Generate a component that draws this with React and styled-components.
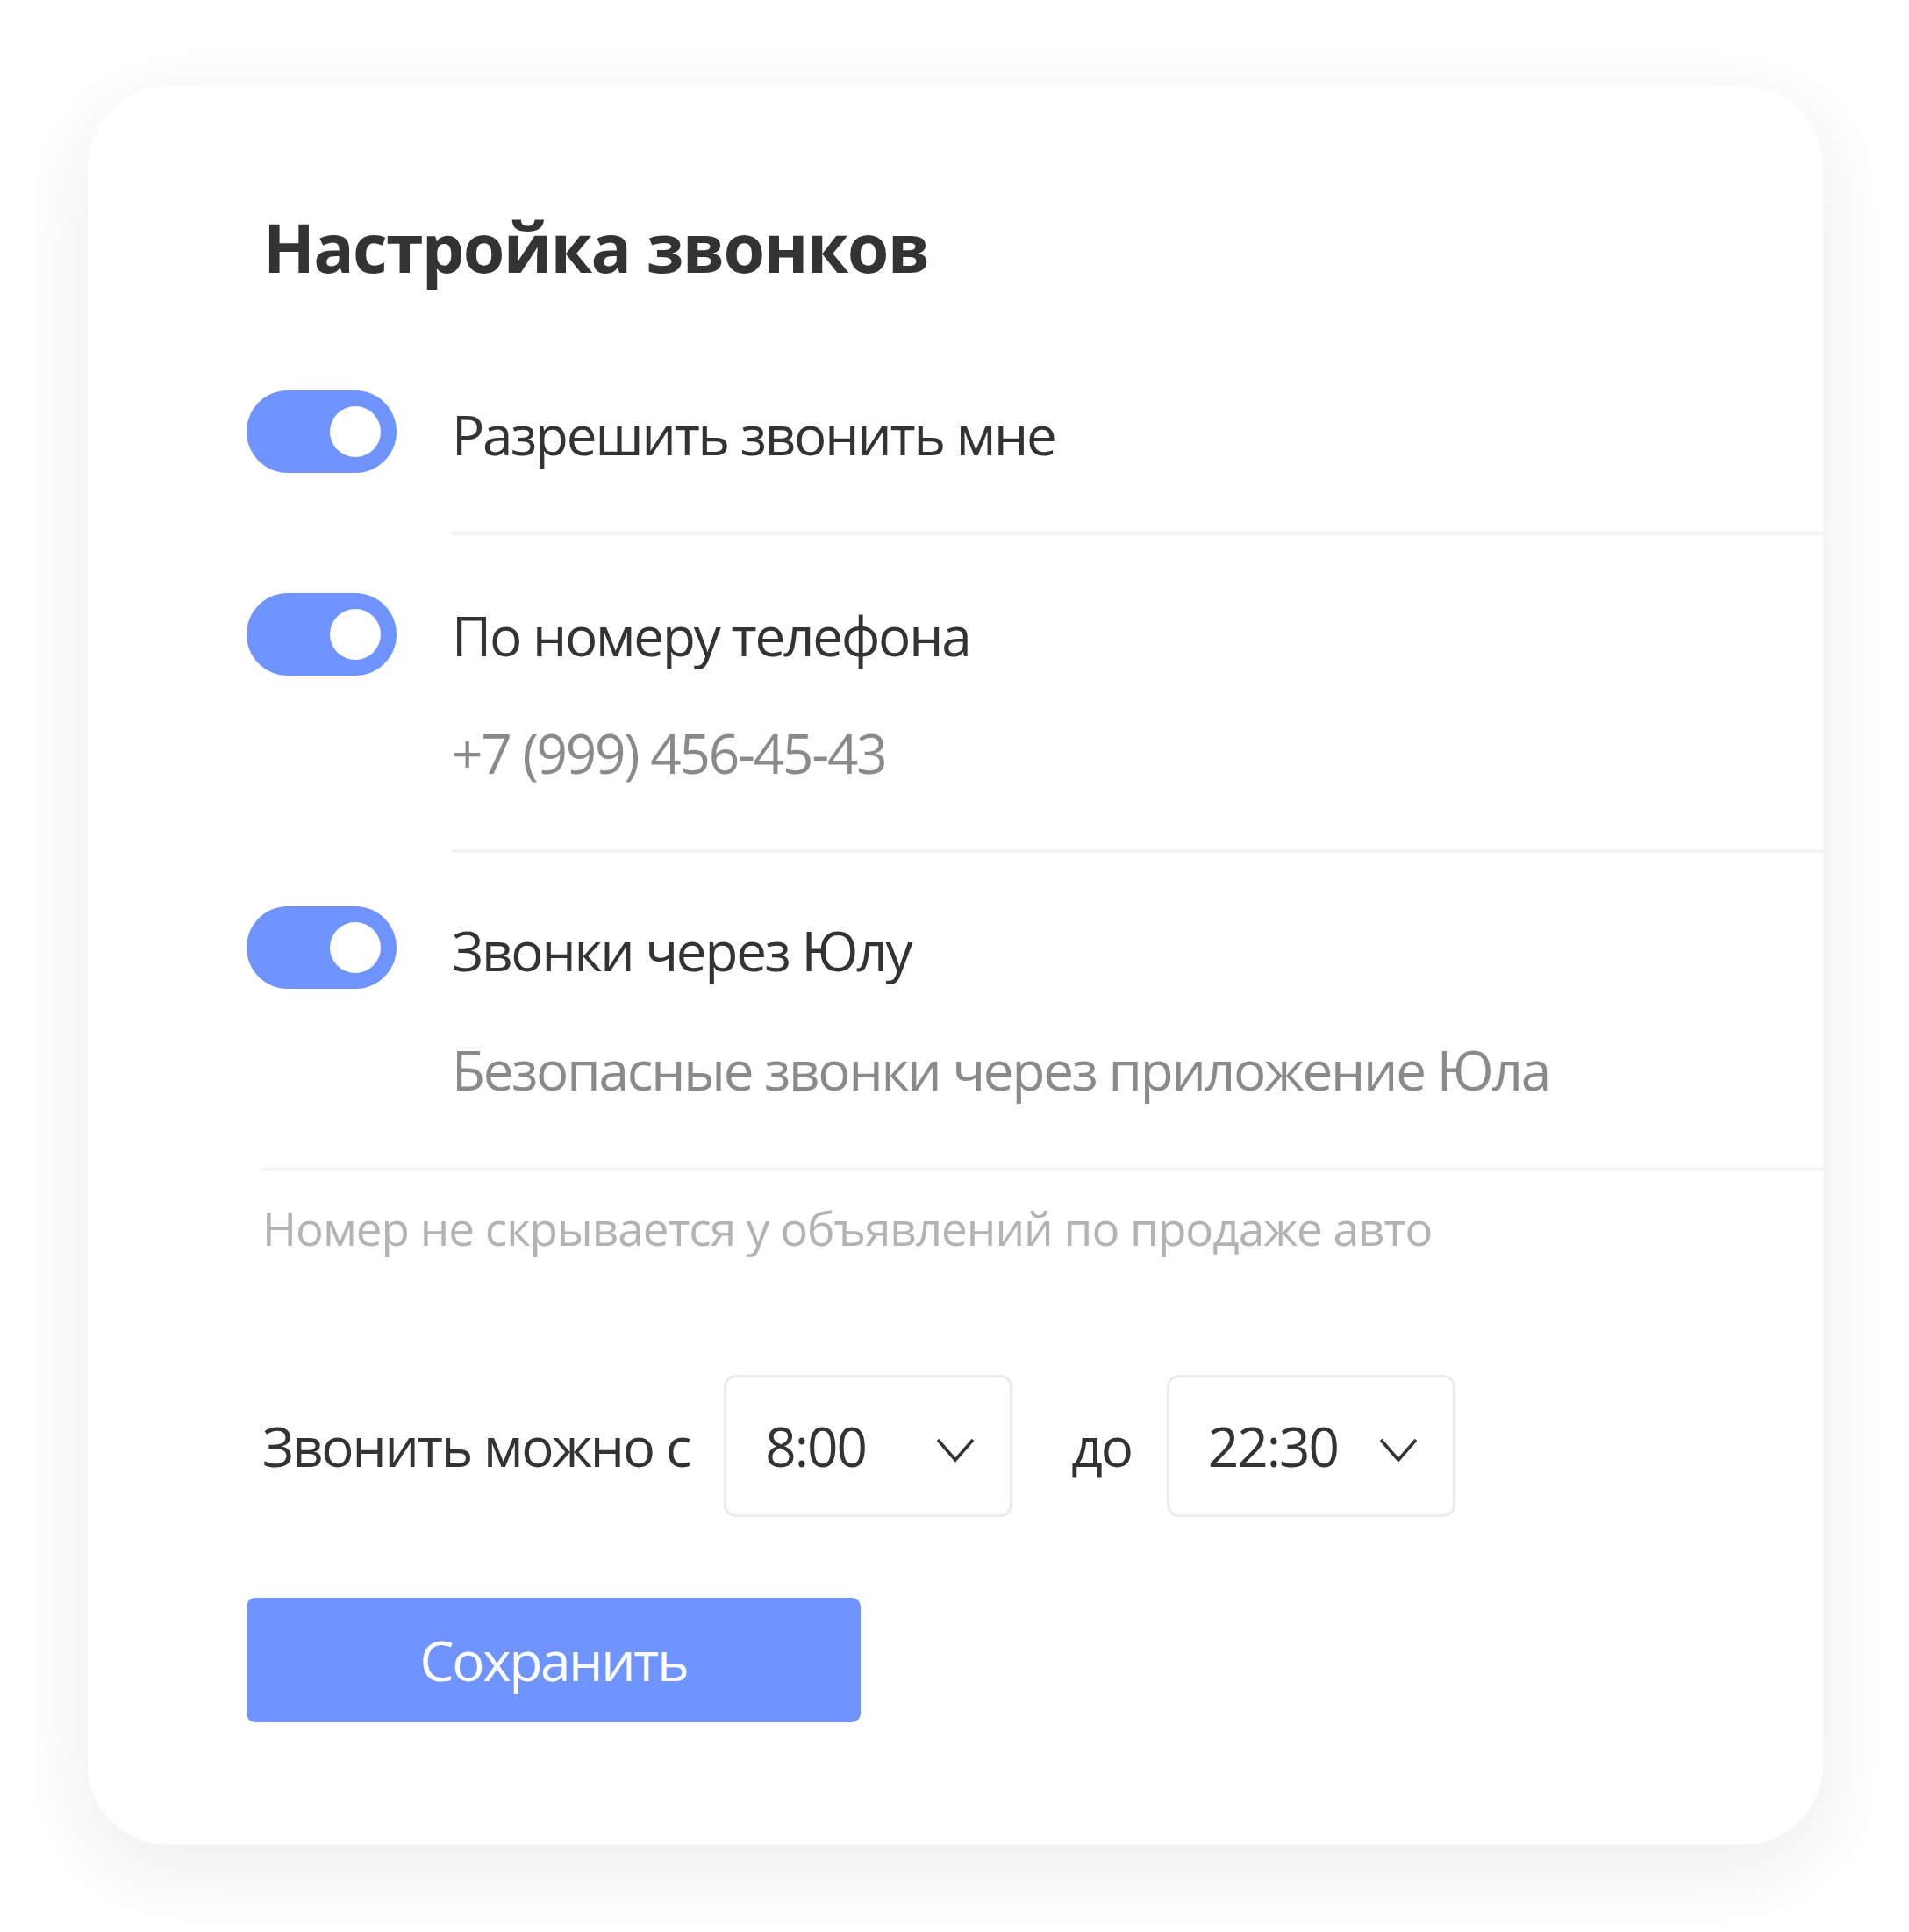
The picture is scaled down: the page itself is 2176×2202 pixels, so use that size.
import React from 'react';
import styled, { createGlobalStyle } from 'styled-components';

const blue = '#6f93ff';
const textDark = '#333333';
const textGray = '#8a8a8a';
const textLight = '#b3b3b3';
const lineColor = '#f2f2f2';

const GlobalStyle = createGlobalStyle`
  body {
    margin: 0;
    background: #ffffff;
    font-family: 'Open Sans', 'Noto Sans', sans-serif;
    color: ${textDark};
  }
`;

const Page = styled.div`
  padding: 98px 98px 99px 100px;
`;

const Card = styled.div`
  background: #fff;
  border-radius: 92px;
  box-shadow: 0 24px 96px rgba(0, 0, 0, 0.08);
  padding: 136px 0 140px 181px;
`;

const Title = styled.h1`
  margin: 0 0 115px 19px;
  font-size: 77px;
  line-height: 96px;
  letter-spacing: -1.7px;
  font-weight: 700;
  color: ${textDark};
`;

const Setting = styled.div`
  display: grid;
  grid-template-columns: 171px 1fr;
  column-gap: 63px;
  align-items: start;
  margin-top: ${p => p.$top || 0}px;
`;

const Toggle = styled.div`
  position: relative;
  width: 171px;
  height: 94px;
  border-radius: 47px;
  background: ${p => (p.$on ? blue : '#d9d9d9')};

  &::after {
    content: '';
    position: absolute;
    top: 18px;
    left: ${p => (p.$on ? 95 : 18)}px;
    width: 58px;
    height: 58px;
    border-radius: 50%;
    background: #fff;
  }
`;

const SettingBody = styled.div`
  padding-top: ${p => p.$pad ?? 5}px;
  padding-bottom: ${p => p.$bottom}px;
  border-bottom: ${p => (p.$last ? 'none' : `4px solid ${lineColor}`)};
`;

const Label = styled.div`
  font-size: 62px;
  line-height: 90px;
  letter-spacing: -2.2px;
  color: ${textDark};
`;

const Sub = styled(Label)`
  margin-top: ${p => p.$gap}px;
  color: ${textGray};
`;

const Divider = styled.div`
  height: 4px;
  background: ${lineColor};
  margin-left: 18px;
`;

const Note = styled.div`
  margin: 29px 0 0 18px;
  font-size: 53px;
  line-height: 72px;
  letter-spacing: -1px;
  color: ${textLight};
`;

const TimeRow = styled.div`
  display: flex;
  align-items: center;
  margin: 131px 0 0 18px;
`;

const TimeText = styled(Label)`
  margin: ${p => p.$margin};
`;

const Select = styled.div`
  box-sizing: border-box;
  width: 329px;
  height: 162px;
  border: 3px solid #ebebeb;
  border-radius: 14px;
  display: flex;
  align-items: center;
  justify-content: space-between;
  padding: 0 40px 0 44px;
  font-size: 62px;
  letter-spacing: -2px;
  color: ${textDark};

  svg {
    margin-top: 10px;
  }
`;

const Chevron = () => (
  <svg width="44" height="30" viewBox="0 0 44 30" fill="none">
    <path d="M2 3 L22 26 L42 3" stroke="#333" strokeWidth="3.5" />
  </svg>
);

const SaveButton = styled.button`
  display: block;
  margin-top: 92px;
  width: 700px;
  height: 142px;
  border: none;
  border-radius: 10px;
  background: ${blue};
  color: #fff;
  font-family: 'Open Sans', sans-serif;
  font-size: 62px;
  letter-spacing: -2.3px;
  cursor: pointer;
`;

const App = () => (
  <Page>
    <GlobalStyle />
    <Card>
      <Title>Настройка звонков</Title>

      <Setting>
        <Toggle $on />
        <SettingBody $bottom={66}>
          <Label>Разрешить звонить мне</Label>
        </SettingBody>
      </Setting>

      <Setting $top={66}>
        <Toggle $on />
        <SettingBody $pad={3} $bottom={65}>
          <Label>По номеру телефона</Label>
          <Sub $gap={44}>+7 (999) 456-45-43</Sub>
        </SettingBody>
      </Setting>

      <Setting $top={61}>
        <Toggle $on />
        <SettingBody $bottom={67} $last>
          <Label>Звонки через Юлу</Label>
          <Sub $gap={46}>Безопасные звонки через приложение Юла</Sub>
        </SettingBody>
      </Setting>

      <Divider />
      <Note>Номер не скрывается у объявлений по продаже авто</Note>

      <TimeRow>
        <TimeText $margin="0 39px 0 0">Звонить можно с</TimeText>
        <Select>
          8:00
          <Chevron />
        </Select>
        <TimeText $margin="0 40px 0 67px">до</TimeText>
        <Select>
          22:30
          <Chevron />
        </Select>
      </TimeRow>

      <SaveButton>Сохранить</SaveButton>
    </Card>
  </Page>
);

export default App;
